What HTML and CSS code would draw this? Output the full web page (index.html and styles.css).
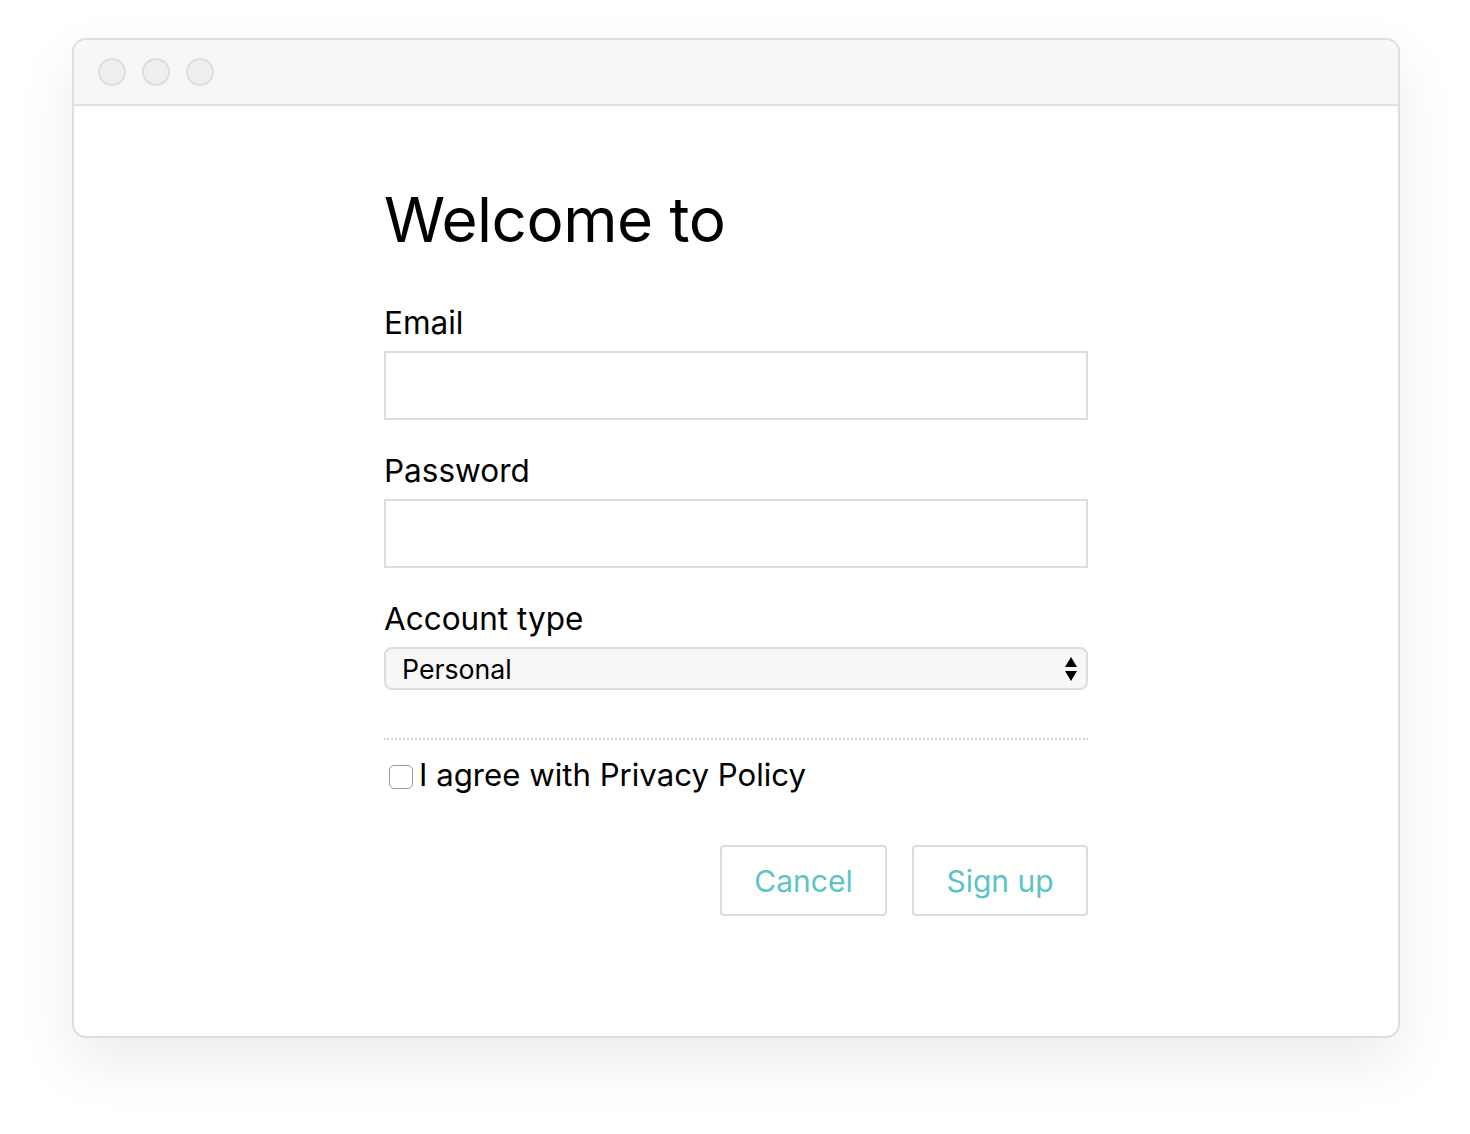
FILE: index.html
```html
<!DOCTYPE html>
<html lang="en">
<head>
<meta charset="utf-8">
<title>Sign up</title>
<link rel="stylesheet" href="styles.css">
</head>
<body>
<div class="window">
  <div class="titlebar">
    <span class="dot"></span><span class="dot"></span><span class="dot"></span>
  </div>
  <div class="content">
    <form class="form">
      <h1 class="title">Welcome to</h1>
      <label class="label">Email</label>
      <div class="input"></div>
      <label class="label">Password</label>
      <div class="input"></div>
      <label class="label">Account type</label>
      <div class="select">
        <span class="select-text">Personal</span>
        <svg class="arrows" width="14" height="28" viewBox="0 0 14 28"><path d="M7 2 L13 12 L1 12 Z" fill="#000"/><path d="M1 16 L13 16 L7 26 Z" fill="#000"/></svg>
      </div>
      <div class="divider"></div>
      <div class="check-row">
        <span class="checkbox"></span>
        <span class="check-text">I agree with Privacy Policy</span>
      </div>
      <div class="buttons">
        <button type="button" class="btn btn-cancel">Cancel</button>
        <button type="button" class="btn btn-signup">Sign up</button>
      </div>
    </form>
  </div>
</div>
</body>
</html>
```

FILE: styles.css
```css
html, body {
  margin: 0;
  padding: 0;
  background: #fff;
}
body {
  font-family: Inter, "Noto Sans", "Liberation Sans", sans-serif;
  color: #000;
  min-height: 1134px;
}
.window {
  box-sizing: border-box;
  margin: 38px 0 0 72px;
  width: 1328px;
  height: 1000px;
  border: 2px solid #dedede;
  border-radius: 14px;
  background: #fff;
  box-shadow: 0 24px 60px rgba(0, 0, 0, 0.08);
  overflow: hidden;
  display: flex;
  flex-direction: column;
}
.titlebar {
  box-sizing: border-box;
  height: 66px;
  background: #f7f7f7;
  border-bottom: 2px solid #e2e2e2;
  display: flex;
  align-items: center;
  gap: 16px;
  padding-left: 24px;
}
.dot {
  box-sizing: border-box;
  width: 28px;
  height: 28px;
  border-radius: 50%;
  background: #eeeeee;
  border: 2px solid #dddddd;
}
.content {
  flex: 1;
  padding-left: 310px;
}
.form {
  width: 704px;
  display: flex;
  flex-direction: column;
}
.title {
  margin: 76px 0 0 0;
  font-size: 62px;
  font-weight: 400;
  line-height: 76px;
  letter-spacing: -0.5px;
}
.label {
  font-size: 31.5px;
  line-height: 36px;
  margin-top: 33px;
  margin-bottom: 10px;
}
.title + .label {
  margin-top: 47px;
}
.input {
  box-sizing: border-box;
  height: 69px;
  border: 2px solid #dcdcdc;
  background: #fff;
}
.select {
  box-sizing: border-box;
  height: 43px;
  border: 2px solid #dcdcdc;
  border-radius: 8px;
  background: #f7f7f7;
  display: flex;
  align-items: center;
  justify-content: space-between;
  padding: 0 8px 0 16px;
}
.select-text {
  font-size: 26.7px;
}
.divider {
  margin-top: 48px;
  border-top: 2px dotted #d8d8d8;
}
.check-row {
  display: flex;
  align-items: center;
  gap: 6px;
  margin-top: 15px;
  padding-left: 5px;
}
.checkbox {
  box-sizing: border-box;
  width: 24px;
  height: 24px;
  border: 1.5px solid #9a9a9a;
  border-radius: 5px;
  background: #fff;
  margin-top: 4px;
}
.check-text {
  font-size: 31.2px;
  line-height: 40px;
}
.buttons {
  display: flex;
  justify-content: flex-end;
  gap: 25px;
  margin-top: 50px;
}
.btn {
  box-sizing: border-box;
  height: 71px;
  border: 2px solid #dcdcdc;
  border-radius: 4px;
  background: #fff;
  color: #5bc4c6;
  font-family: inherit;
  font-size: 30px;
  padding: 0;
}
.btn-cancel { width: 167px; }
.btn-signup { width: 176px; }
```
